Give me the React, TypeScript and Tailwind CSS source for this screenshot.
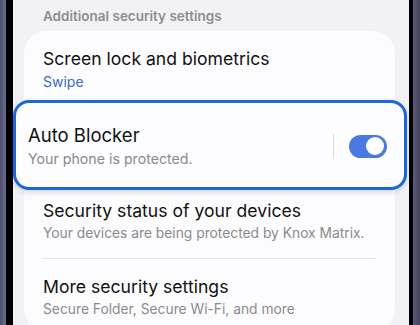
function Row({ title, sub }: { title: string; sub: string }) {
  return (
    <div>
      <div className="text-[17.6px] leading-[24px] text-[#111]">{title}</div>
      <div className="text-[13.8px] leading-[20px] text-[#8a8a8d]">{sub}</div>
    </div>
  );
}

function Toggle() {
  return (
    <div className="w-[38px] h-[23px] rounded-full bg-[#4b79e4] flex items-center justify-end pr-[3px]">
      <div className="w-[18px] h-[18px] rounded-full bg-white" />
    </div>
  );
}

export default function App() {
  return (
    <div className="w-[420px] h-[325px] overflow-hidden flex bg-black font-['Inter','Noto_Sans',sans-serif]">
      <div className="w-[6px] bg-gradient-to-r from-[#4d4d6e] to-[#6e6e90]" />
      <div className="w-[7px] bg-black" />
      <div className="flex-1 bg-[#f2f2f6] flex flex-col">
        <div className="pt-[6px] pl-[30px] text-[13.5px] leading-[20px] font-semibold text-[#8d8d91]">
          Additional security settings
        </div>
        <div className="mt-[5px] ml-[11px] mr-[14px] bg-[#fcfcfe] rounded-[22px] px-[19px] pt-[16px] pb-[12px]">
          <div className="pb-[8px]">
            <div className="text-[17.6px] leading-[24px] text-[#111]">Screen lock and biometrics</div>
            <div className="mt-[1px] text-[14px] leading-[20px] text-[#3d6cc5]">Swipe</div>
          </div>
          <div className="-ml-[30px] -mr-[31px] border-[3px] border-[#1868d8] rounded-[16px] bg-[#fdfdff] shadow-[0_2px_6px_rgba(0,0,0,0.15)] pl-[12px] pr-[17px] pt-[20px] pb-[18px] flex items-center">
            <div className="flex-1">
              <div className="text-[18.5px] leading-[24px] text-[#111]">Auto Blocker</div>
              <div className="mt-[2px] text-[14.2px] leading-[20px] text-[#8a8a8d]">Your phone is protected.</div>
            </div>
            <div className="w-px h-[25px] bg-[#dcdce0] mr-[15px]" />
            <Toggle />
          </div>
          <div className="pt-[9px]">
            <Row title="Security status of your devices" sub="Your devices are being protected by Knox Matrix." />
          </div>
          <div className="mt-[15px] -ml-[1px] h-px bg-[#e3e3e7]" />
          <div className="pt-[16px]">
            <Row title="More security settings" sub="Secure Folder, Secure Wi-Fi, and more" />
          </div>
        </div>
      </div>
      <div className="w-[4px] bg-black" />
      <div className="w-[7px] bg-gradient-to-r from-[#5a5a7c] to-[#45455f]" />
    </div>
  );
}
